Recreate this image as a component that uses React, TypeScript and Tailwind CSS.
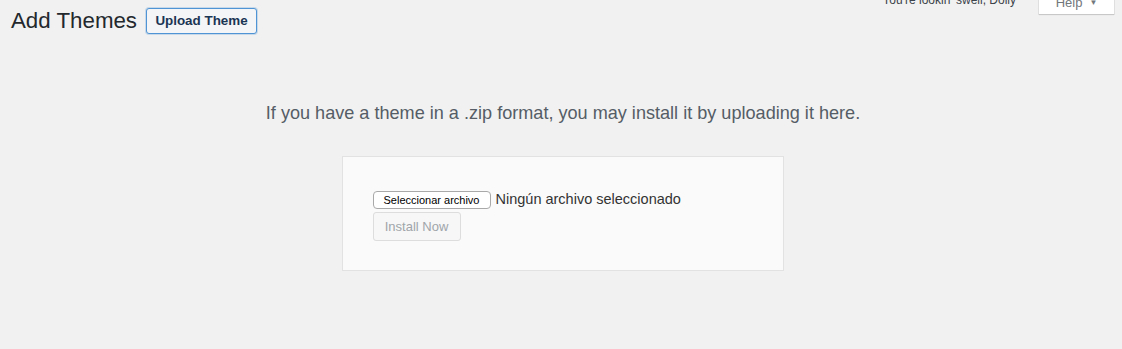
export default function App() {
  return (
    <div className="min-h-screen w-full bg-[#f1f1f1] font-['Liberation_Sans',Arial,sans-serif] text-[#23282d]">
      {/* Header */}
      <div className="flex items-start justify-between">
        <div className="flex items-start pl-[11px] pt-[6px]">
          <h1 className="text-[22.3px] leading-[29px] font-normal text-[#23282d]">Add Themes</h1>
          <button className="ml-[9px] mt-[2px] h-[26px] w-[111px] rounded-[3px] border border-[#4f94d4] bg-[#f3f5f6] text-[13.4px] font-semibold text-[#1b3555] shadow-[0_0_0_1px_rgba(79,148,212,0.25)]">
            Upload Theme
          </button>
        </div>

        <div className="flex items-start pr-[8px]">
          <p className="-mt-[10px] mr-[23px] text-[12px] leading-[20px] text-[#3c434a]">
            You're lookin' swell, Dolly
          </p>
          <button className="-mt-[10px] flex h-[24px] w-[75px] items-end justify-center gap-[7px] bg-white pb-[3px] text-[13px] leading-[16px] text-[#72777c] shadow-[0_1px_1px_rgba(0,0,0,0.12),0_0_0_1px_rgba(0,0,0,0.05)]">
            <span>Help</span>
            <span className="text-[8px] leading-[16px]">▼</span>
          </button>
        </div>
      </div>

      {/* Upload area */}
      <div className="mt-[66px] flex flex-col items-center">
        <p className="ml-[4px] text-[18.1px] leading-[24px] text-[#555d66]">
          If you have a theme in a .zip format, you may install it by uploading it here.
        </p>

        <div className="ml-[3px] mt-[31px] box-border h-[115px] w-[442px] border border-[#e2e2e2] bg-[#fafafa] pl-[30px] pt-[34px]">
          <div className="flex h-[18px] items-center">
            <span className="flex h-[18px] w-[118px] items-center justify-center rounded-[4px] border border-[#a9a9a9] bg-white text-[11px] leading-[16px] text-black">
              Seleccionar archivo
            </span>
            <span className="ml-[5px] -mt-[2px] text-[14.5px] leading-[18px] text-[#333]">Ningún archivo seleccionado</span>
          </div>
          <button
            disabled
            className="mt-[3px] h-[29px] w-[88px] rounded-[3px] border border-[#dddddd] bg-[#f7f7f7] text-[13px] text-[#a0a5aa]"
          >
            Install Now
          </button>
        </div>
      </div>
    </div>
  )
}
